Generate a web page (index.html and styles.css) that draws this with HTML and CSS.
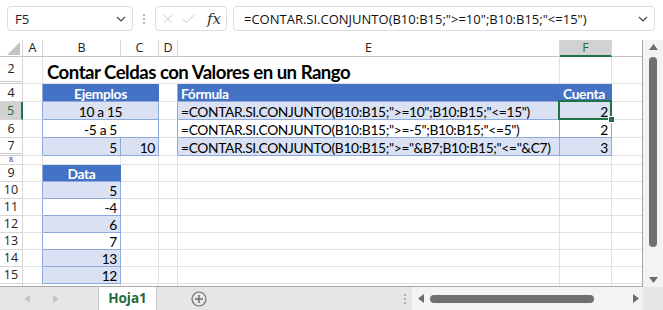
FILE: index.html
```html
<!DOCTYPE html>
<html lang="es">
<head>
<meta charset="utf-8">
<title>Hoja1</title>
<link rel="stylesheet" href="styles.css">
</head>
<body>
<div class="app">
  <div class="fbar">
    <div class="namebox">
      <span>F5</span>
      <svg width="10" height="6" viewBox="0 0 10 6"><path d="M1 1 L5 5 L9 1" fill="none" stroke="#444" stroke-width="1.2"/></svg>
    </div>
    <div class="vdots"><i></i><i></i><i></i></div>
    <div class="fxbox">
      <svg width="12" height="12" viewBox="0 0 12 12"><path d="M1 1 L11 11 M11 1 L1 11" stroke="#c4c4c4" stroke-width="1.2"/></svg>
      <svg width="16" height="12" viewBox="0 0 16 12"><path d="M1 6 L5.5 10.5 L15 1" fill="none" stroke="#c4c4c4" stroke-width="1.2"/></svg>
      <span class="fx">fx</span>
    </div>
    <div class="formula">
      <span>=CONTAR.SI.CONJUNTO(B10:B15;"&gt;=10";B10:B15;"&lt;=15")</span>
      <svg width="10" height="6" viewBox="0 0 10 6"><path d="M1 1 L5 5 L9 1" fill="none" stroke="#444" stroke-width="1.2"/></svg>
    </div>
  </div>

  <div class="main">
    <div class="sheet">
      <table class="grid">
        <colgroup>
          <col style="width:23px"><col style="width:20px"><col style="width:78px"><col style="width:38px">
          <col style="width:19px"><col style="width:382px"><col style="width:52px"><col style="width:31px">
        </colgroup>
        <tr class="hrow">
          <th class="corner"><svg width="13" height="13" viewBox="0 0 13 13"><polygon points="13,0 13,13 0,13" fill="#c3c3c3"/></svg></th>
          <th>A</th><th>B</th><th>C</th><th>D</th><th>E</th><th class="colsel">F</th><th></th>
        </tr>
        <tr class="r2">
          <th class="dbl">2</th><td></td>
          <td colspan="4" class="title">Contar Celdas con Valores en un Rango</td>
          <td></td><td></td>
        </tr>
        <tr class="rr">
          <th>4</th><td class="lb"></td>
          <td colspan="2" class="h c">Ejemplos</td>
          <td class="lb"></td>
          <td class="h">Fórmula</td><td class="h">Cuenta</td><td></td>
        </tr>
        <tr class="rr">
          <th class="rowsel">5</th><td class="lb"></td>
          <td colspan="2" class="b c">10 a 15</td>
          <td class="lb"></td>
          <td class="b">=CONTAR.SI.CONJUNTO(B10:B15;"&gt;=10";B10:B15;"&lt;=15")</td>
          <td class="b r active">2<div class="sel"><i></i></div></td><td></td>
        </tr>
        <tr class="rr">
          <th>6</th><td class="lb"></td>
          <td colspan="2" class="w c">-5 a 5</td>
          <td class="lb"></td>
          <td class="w">=CONTAR.SI.CONJUNTO(B10:B15;"&gt;=-5";B10:B15;"&lt;=5")</td>
          <td class="w r">2</td><td></td>
        </tr>
        <tr class="rr">
          <th class="dbl">7</th><td class="lb"></td>
          <td class="b r">5</td><td class="b r">10</td>
          <td class="lb"></td>
          <td class="b">=CONTAR.SI.CONJUNTO(B10:B15;"&gt;="&amp;B7;B10:B15;"&lt;="&amp;C7)</td>
          <td class="b r">3</td><td></td>
        </tr>
        <tr class="r8">
          <th class="tiny">8</th><td></td><td></td><td></td><td></td><td></td><td></td><td></td>
        </tr>
        <tr class="rd">
          <th>9</th><td class="lb"></td><td class="h c">Data</td><td></td><td></td><td></td><td></td><td></td>
        </tr>
        <tr class="rd">
          <th>10</th><td class="lb"></td><td class="b r">5</td><td></td><td></td><td></td><td></td><td></td>
        </tr>
        <tr class="rd">
          <th>11</th><td class="lb"></td><td class="w r">-4</td><td></td><td></td><td></td><td></td><td></td>
        </tr>
        <tr class="rd">
          <th>12</th><td class="lb"></td><td class="b r">6</td><td></td><td></td><td></td><td></td><td></td>
        </tr>
        <tr class="rd">
          <th>13</th><td class="lb"></td><td class="w r">7</td><td></td><td></td><td></td><td></td><td></td>
        </tr>
        <tr class="rd">
          <th>14</th><td class="lb"></td><td class="b r">13</td><td></td><td></td><td></td><td></td><td></td>
        </tr>
        <tr class="rd">
          <th>15</th><td class="lb"></td><td class="b r">12</td><td></td><td></td><td></td><td></td><td></td>
        </tr>
        <tr class="rd">
          <th></th><td></td><td></td><td></td><td></td><td></td><td></td><td></td>
        </tr>
      </table>
    </div>
    <div class="vscroll">
      <svg width="9" height="6" viewBox="0 0 9 6"><polygon points="4.5,0 9,6 0,6" fill="#6b6b6b"/></svg>
      <div class="vthumb"></div>
      <svg width="9" height="6" viewBox="0 0 9 6"><polygon points="0,0 9,0 4.5,6" fill="#6b6b6b"/></svg>
    </div>
  </div>

  <div class="tabs">
    <div class="nav">
      <svg width="6" height="8" viewBox="0 0 6 8"><polygon points="6,0 6,8 0,4" fill="#c6c6c6"/></svg>
      <svg width="6" height="8" viewBox="0 0 6 8"><polygon points="0,0 0,8 6,4" fill="#c6c6c6"/></svg>
    </div>
    <div class="tab">Hoja1</div>
    <div class="add">
      <svg width="16" height="16" viewBox="0 0 16 16"><circle cx="8" cy="8" r="7" fill="none" stroke="#6f6f6f" stroke-width="1.2"/><path d="M8 4 V12 M4 8 H12" stroke="#6f6f6f" stroke-width="1.4"/></svg>
    </div>
    <div class="spacer"></div>
    <div class="vdots small"><i></i><i></i><i></i></div>
    <div class="hscroll">
      <svg width="6" height="9" viewBox="0 0 6 9"><polygon points="6,0 6,9 0,4.5" fill="#6b6b6b"/></svg>
      <div class="hthumb"></div>
      <svg width="6" height="9" viewBox="0 0 6 9"><polygon points="0,0 0,9 6,4.5" fill="#6b6b6b"/></svg>
    </div>
    <div class="corner2"></div>
  </div>
</div>
</body>
</html>
```
FILE: styles.css
```css
body {
    margin: 0;
    background: #fff;
    font-family: "Open Sans", "Noto Sans", sans-serif;
    color: #222;
}

.app {
    width: 663px;
    height: 310px;
    overflow: hidden;
    display: flex;
    flex-direction: column;
}

/* barra de fórmulas */
.fbar {
    height: 40px;
    display: flex;
    align-items: flex-start;
    padding: 6px 8px 0 7px;
    box-sizing: border-box;
}

.namebox,
.fxbox,
.formula {
    height: 25px;
    box-sizing: border-box;
    border: 1px solid #dcdcdc;
    border-radius: 4px;
    display: flex;
    align-items: center;
    background: #fff;
}

.namebox {
    width: 126px;
    padding: 0 6px 0 7px;
    justify-content: space-between;
    font-size: 13px;
}

.vdots {
    width: 22px;
    height: 25px;
    display: flex;
    flex-direction: column;
    align-items: center;
    justify-content: center;
    gap: 2px;
}

.vdots i {
    width: 2px;
    height: 2px;
    background: #9a9a9a;
    border-radius: 1px;
}

.fxbox {
    width: 72px;
    padding: 0 5px 0 7px;
    gap: 10px;
}

.fx {
    font-family: "DejaVu Serif", "Liberation Serif", serif;
    font-style: italic;
    font-size: 15px;
    color: #333;
    margin-left: 2px;
}

.formula {
    width: 422px;
    margin-left: 6px;
    padding: 0 6px 0 10px;
    justify-content: space-between;
    font-size: 13px;
    color: #111;
}

/* hoja */
.main {
    display: flex;
    height: 247px;
}

.sheet {
    width: 643px;
    height: 247px;
    overflow: hidden;
    border-right: 1px solid #a8a8a8;
    border-bottom: 1px solid #a8a8a8;
    box-sizing: border-box;
}

.grid {
    table-layout: fixed;
    border-collapse: separate;
    border-spacing: 0;
    width: 643px;
    font-family: Lato, "Open Sans", sans-serif;
    font-size: 13.8px;
    letter-spacing: -0.35px;
    color: #000;
}

.grid th {
    font-family: "Open Sans", "Noto Sans", sans-serif;
    font-weight: normal;
    font-size: 12.5px;
    letter-spacing: 0;
    color: #222;
    background: #fff;
    border-right: 1px solid #d6d6d6;
    border-bottom: 1px solid #d6d6d6;
    padding: 0;
    text-align: center;
    overflow: hidden;
    line-height: 14px;
}

.grid td {
    border-right: 1px solid #e1e1e1;
    border-bottom: 1px solid #e1e1e1;
    padding: 0 3px 0 3px;
    white-space: nowrap;
    overflow: hidden;
    line-height: 15px;
    vertical-align: bottom;
}

.hrow { height: 17px; }
.r2 { height: 27px; }
.rr { height: 18px; }
.r8 { height: 9px; }
.rd { height: 17px; }

.hrow th { border-bottom-color: #c4c4c4; vertical-align: middle; }

.corner {
    text-align: right !important;
    vertical-align: bottom !important;
}

.corner svg {
    display: block;
    margin: 0 2px 1px auto;
}

.grid th.tiny {
    font-size: 7px;
    line-height: 8px;
}

.dbl { border-bottom: 3px double #c8c8c8 !important; }

.colsel {
    background: #d2d2d2 !important;
    color: #1e6c41 !important;
    border-bottom: 2px solid #217346 !important;
}

.rowsel {
    background: #d2d2d2 !important;
    color: #1e6c41 !important;
    border-right: 2px solid #217346 !important;
}

.title {
    font-weight: bold;
    font-size: 18.6px;
    letter-spacing: -0.5px;
    padding-left: 4px !important;
    line-height: 22px !important;
}

.c { text-align: center; }
.r { text-align: right; }

.h {
    background: #4472c4;
    color: #fff;
    font-weight: bold;
    border-right-color: #4472c4 !important;
    border-bottom-color: #8ea9db !important;
}

.b {
    background: #d9e1f2;
    border-right-color: #8ea9db !important;
    border-bottom-color: #8ea9db !important;
}

.w {
    background: #fff;
    border-right-color: #8ea9db !important;
    border-bottom-color: #8ea9db !important;
}

.lb { border-right-color: #8ea9db !important; }

.active { position: relative; overflow: visible !important; }

.sel {
    position: absolute;
    left: -2px;
    top: -2px;
    right: -1px;
    bottom: -1px;
    border: 2px solid #217346;
}

.sel i {
    position: absolute;
    right: -5px;
    bottom: -5px;
    width: 5px;
    height: 5px;
    background: #217346;
    border: 1px solid #fff;
}

/* barras de desplazamiento */
.vscroll {
    width: 20px;
    background: #f3f3f3;
    display: flex;
    flex-direction: column;
    align-items: center;
    padding-top: 4px;
    box-sizing: border-box;
}

.vthumb {
    width: 8px;
    height: 190px;
    margin: 7px 0 auto;
    background: #707070;
    border-radius: 4px;
}

.vscroll svg:last-child { margin-bottom: 4px; }

.tabs {
    height: 23px;
    display: flex;
    background: #e6e6e6;
}

.nav {
    width: 98px;
    display: flex;
    align-items: center;
    gap: 23px;
    padding-left: 24px;
    box-sizing: border-box;
}

.tab {
    width: 59px;
    background: #fff;
    border-left: 1px solid #c8c8c8;
    border-right: 1px solid #c8c8c8;
    box-sizing: border-box;
    text-align: center;
    font-family: "Open Sans", sans-serif;
    font-weight: bold;
    font-size: 13.5px;
    line-height: 23px;
    color: #1e6c41;
}

.add {
    width: 84px;
    display: flex;
    align-items: center;
    justify-content: center;
}

.spacer { flex: 1; }

.vdots.small { height: 23px; width: 14px; }

.hscroll {
    width: 231px;
    background: #f3f3f3;
    display: flex;
    align-items: center;
    padding: 0 4px 0 6px;
    box-sizing: border-box;
}

.hthumb {
    width: 164px;
    height: 8px;
    margin: 0 auto 0 6px;
    background: #707070;
    border-radius: 4px;
}

.corner2 { width: 20px; }
```
